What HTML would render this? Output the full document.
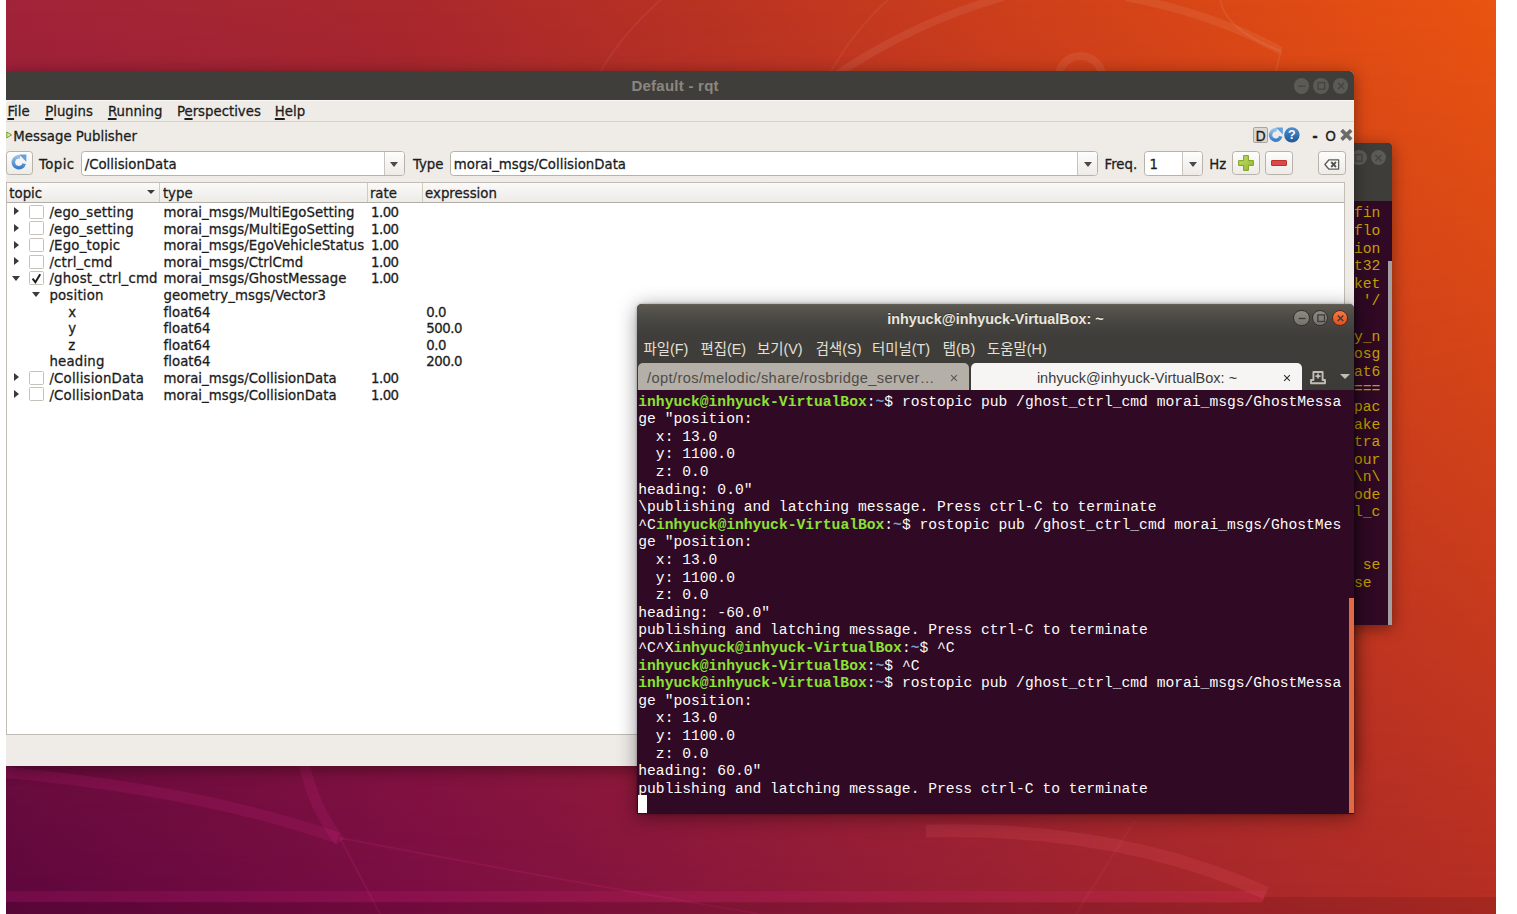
<!DOCTYPE html>
<html lang="ko">
<head>
<meta charset="utf-8">
<title>Default - rqt</title>
<style>
html,body{margin:0;padding:0;background:#fff;}
body{width:1517px;height:914px;position:relative;overflow:hidden;font-family:"DejaVu Sans","Liberation Sans",sans-serif;font-size:13.3px;color:#1c1c1c;}
#desk{position:absolute;left:6px;top:0;width:1490px;height:914px;overflow:hidden;}
#in{position:absolute;left:-6px;top:0;width:1517px;height:914px;}
#wall{position:absolute;left:6px;top:0;width:1490px;height:914px;overflow:hidden;
 background:linear-gradient(90deg,#5e073e 0%,#7a0d44 27%,#8a173c 47%,#9a2033 67%,#ab2929 87%,#b62e23 100%);}
#wall svg{position:absolute;left:0;top:0;}
.t{position:absolute;white-space:pre;line-height:16px;}
#rqt .t{-webkit-text-stroke:0.28px #1c1c1c;}
u{text-decoration:underline;text-underline-offset:1.8px;text-decoration-thickness:1.5px;}
/* ---------- rqt window ---------- */
#rqt{position:absolute;left:6px;top:71px;width:1348px;height:695px;background:#efece8;border-radius:0 5px 0 0;box-shadow:0 3px 16px rgba(0,0,0,0.42);}
#rqt .tbar{position:absolute;left:0;top:0;width:1348px;height:29.3px;background:#3f3e3a;border-radius:0 5px 0 0;}
#rqt .ttl{position:absolute;left:625.4px;top:6px;white-space:pre;font-family:"Liberation Sans",sans-serif;font-weight:bold;font-size:15px;letter-spacing:0.25px;color:#8b877f;line-height:18px;}
.wb{position:absolute;width:16px;height:16px;border-radius:8px;}
.btn{position:absolute;box-sizing:border-box;border:1px solid #b7b2aa;border-radius:3.5px;background:linear-gradient(#fdfdfc,#eeebe7);}
.combo{position:absolute;box-sizing:border-box;border:1px solid #b7b2aa;border-radius:3.5px;background:#fff;}
.combo .dd{position:absolute;right:0;top:0;bottom:0;width:19px;border-left:1px solid #c9c5be;background:linear-gradient(#fdfdfc,#eeebe7);border-radius:0 3px 3px 0;}
.combo .dd:after{content:"";position:absolute;left:5.5px;top:9.5px;border-left:4.5px solid transparent;border-right:4.5px solid transparent;border-top:5px solid #4a4a48;}
.cb{position:absolute;width:12.2px;height:12.2px;border:1px solid #c6c2bb;background:#fff;border-radius:1.5px;}
.ar{position:absolute;width:0;height:0;}
.ar.r{border-top:4.8px solid transparent;border-bottom:4.8px solid transparent;border-left:5.5px solid #3a3a3a;}
.ar.d{border-left:4.5px solid transparent;border-right:4.5px solid transparent;border-top:5.5px solid #3c3c3c;}
/* ---------- terminal ---------- */
.termw{position:absolute;background:#300a24;}
#term{left:637px;top:304px;width:717px;height:509.5px;border-radius:5px 5px 0 0;box-shadow:0 3px 20px rgba(0,0,0,0.42),0 0 3px rgba(0,0,0,0.35);}
#term .hdr{position:absolute;left:0;top:0;width:717px;height:86px;border-radius:5px 5px 0 0;background:linear-gradient(#66635a 0px,#5a5850 1.2px,#4b4944 14px,#3f3e3a 30px,#3c3b37 86px);}
.gt{font-family:"Liberation Sans","Noto Sans CJK KR",sans-serif;font-size:14.67px;}
.km{font-size:14.4px;}
pre{margin:0;}
.mono{font-family:"Liberation Mono","DejaVu Sans Mono",monospace;font-size:14.65px;line-height:17.59px;white-space:pre;position:absolute;}
.g{color:#8ae234;font-weight:bold;}
.b{color:#729fcf;font-weight:bold;}
</style>
</head>
<body>
<div id="desk"><div id="in">
<div id="wall"><svg width="1490" height="914" viewBox="6 0 1490 914" fill="none"><defs><linearGradient id="wb" x1="0" y1="0" x2="1" y2="0"><stop offset="0" stop-color="#5e073e"/><stop offset="0.27" stop-color="#7a0d44"/><stop offset="0.47" stop-color="#8a173c"/><stop offset="0.67" stop-color="#9a2033"/><stop offset="0.87" stop-color="#ab2929"/><stop offset="1" stop-color="#b62e23"/></linearGradient><linearGradient id="wt" x1="0" y1="0" x2="1" y2="0"><stop offset="0" stop-color="#a22339"/><stop offset="0.27" stop-color="#a9282c"/><stop offset="0.47" stop-color="#b93322"/><stop offset="0.67" stop-color="#cd3f1b"/><stop offset="0.87" stop-color="#df4b14"/><stop offset="1" stop-color="#e95410"/></linearGradient><linearGradient id="wm" x1="0" y1="0" x2="0" y2="1"><stop offset="0" stop-color="#fff"/><stop offset="1" stop-color="#000"/></linearGradient><mask id="wmask" maskUnits="userSpaceOnUse" x="6" y="0" width="1490" height="914"><rect x="6" y="0" width="1490" height="914" fill="url(#wm)"/></mask></defs><rect x="6" y="0" width="1490" height="914" fill="url(#wb)"/><rect x="6" y="0" width="1490" height="914" fill="url(#wt)" mask="url(#wmask)"/><g stroke="#ffffff" stroke-opacity="0.07" stroke-linecap="butt"><path d="M836 75 Q 915 22 1003 -3" stroke-width="8"/><path d="M1126 -3 Q 1215 14 1281 51" stroke-width="8"/><circle cx="1080.5" cy="78" r="22" stroke-width="8"/><path d="M1220 -2 Q 1224 30 1281 51 L1275 74" stroke-width="2"/><path d="M598 75 Q 625 30 663 -2" stroke-width="2" stroke-opacity="0.05"/><path d="M829 75 Q 852 32 890 -2" stroke-width="2" stroke-opacity="0.05"/></g><g stroke="#ff3aa8" stroke-opacity="0.11"><path d="M2 772 Q 200 790 338 838" stroke-width="11"/><path d="M304 762 Q 312 805 340 842" stroke-width="11"/><path d="M340 838 Q 560 880 760 914" stroke-width="2"/><path d="M340 838 L 380 914" stroke-width="2"/></g><path d="M6 891 H1268 L1262 902 H6 Z" fill="#ff2aa0" fill-opacity="0.12"/><path d="M926 831 Q 1120 826 1266 893"  stroke="#ff6a7a" stroke-opacity="0.13" stroke-width="13"/><path d="M1135 820 L1076 914" stroke="#ff6a7a" stroke-opacity="0.06" stroke-width="3"/><path d="M6 902.5 H1262 L1265 897 H1496 V914 H6 Z" fill="#300010" fill-opacity="0.13"/></svg></div>
<div class="termw" id="bterm" style="left:1300px;top:143px;width:92px;height:481.5px;border-radius:5px 5px 0 0;box-shadow:0 3px 16px rgba(0,0,0,0.42);">
<div style="position:absolute;left:0;top:0;width:92px;height:58px;background:#3e3d39;border-radius:5px 5px 0 0;"></div>
<div class="wb" style="left:51.3px;top:6.6px;width:15.6px;height:15.6px;background:#5b5a55;"></div><div class="wb" style="left:70.9px;top:6.6px;width:15.6px;height:15.6px;background:#5b5a55;"></div>
<svg style="position:absolute;left:51.3px;top:6.6px" width="36" height="16" viewBox="0 0 36 16"><rect x="4.5" y="4.6" width="6.6" height="6.6" fill="none" stroke="#45443f" stroke-width="1.3"/><path d="M24.4 5 L30.4 11 M30.4 5 L24.4 11" stroke="#45443f" stroke-width="1.3"/></svg>
<pre class="mono" style="left:53.9px;top:62.4px;color:#c4a000;">fin
flo
ion
t32
ket
 &#x27;/

y_n
osg
at6
===
pac
ake
tra
our
\n\
ode
l_c


 se
se </pre>
<div style="position:absolute;left:87.5px;top:118px;width:4.5px;height:363.5px;background:#a39ea1;"></div>
</div>
<div id="rqt">
<div class="tbar"></div><div class="ttl">Default - rqt</div>
<div class="wb" style="left:1287.6px;top:7.3px;width:15.6px;height:15.6px;background:#5b5a55;"></div>
<div class="wb" style="left:1307.2px;top:7.3px;width:15.6px;height:15.6px;background:#5b5a55;"></div>
<div class="wb" style="left:1326.7px;top:7.3px;width:15.6px;height:15.6px;background:#5b5a55;"></div>
<svg style="position:absolute;left:1287.6px;top:7.3px" width="56" height="16" viewBox="0 0 56 16"><path d="M4.2 8.2 H11.4" stroke="#45443f" stroke-width="1.3"/><rect x="24.1" y="4.6" width="6.6" height="6.6" fill="none" stroke="#45443f" stroke-width="1.3"/><path d="M44.1 5 L50.1 11 M50.1 5 L44.1 11" stroke="#45443f" stroke-width="1.3"/></svg>
<div style="position:absolute;left:0;top:29px;width:1348px;height:1px;background:#f8f7f5;"></div>
<div style="position:absolute;left:0;top:50px;width:1348px;height:1px;background:#d5d1cb;"></div>
<div class="t" style="left:1.4px;top:32.8px;"><u>F</u>ile</div>
<div class="t" style="left:39.2px;top:32.8px;"><u>P</u>lugins</div>
<div class="t" style="left:101.9px;top:32.8px;"><u>R</u>unning</div>
<div class="t" style="left:170.9px;top:32.8px;">P<u>e</u>rspectives</div>
<div class="t" style="left:268.8px;top:32.8px;"><u>H</u>elp</div>
<svg style="position:absolute;left:0px;top:60px" width="7" height="8" viewBox="0 0 7 8"><path d="M0.8 1 L5.6 3.9 L0.8 6.8 Z" fill="#d9ecb0" stroke="#73a021" stroke-width="1"/></svg>
<div class="t" style="left:7.3px;top:57.6px;">Message Publisher</div>
<div style="position:absolute;left:1247px;top:56.3px;width:13px;height:13.7px;border:1px solid #aaa69f;border-radius:2px;background:#dcd9d4;box-sizing:content-box;"></div>
<div class="t" style="left:1249.6px;top:57.9px;font-size:13.3px;">D</div>
<svg style="position:absolute;left:1262px;top:55.7px" width="16" height="16" viewBox="0 0 16 16"><path d="M12.8 9.3 A5.2 5.2 0 1 1 8.9 2.9" fill="none" stroke="url(#rg)" stroke-width="3.5"/><path d="M7.9 0.5 H14.9 V7.6 Z" fill="#63a1dd"/></svg>
<svg style="position:absolute;left:1278px;top:56px" width="16" height="16" viewBox="0 0 16 16"><defs><linearGradient id="hg" x1="0" y1="0" x2="0" y2="1"><stop offset="0" stop-color="#4f8fd0"/><stop offset="1" stop-color="#1d5796"/></linearGradient></defs><circle cx="7.9" cy="7.9" r="7.7" fill="url(#hg)"/><text x="7.9" y="12.2" text-anchor="middle" font-family="Liberation Sans, sans-serif" font-weight="bold" font-size="12.5" fill="#fff">?</text></svg>
<div class="t" style="left:1306.2px;top:57.9px;font-weight:bold;">-</div>
<div class="t" style="left:1319.2px;top:57.2px;font-size:13.6px;">O</div>
<svg style="position:absolute;left:1334px;top:58.3px" width="13" height="12" viewBox="0 0 13 12"><path d="M1.6 1.2 L11.2 10.6 M11.2 1.2 L1.6 10.6" stroke="#6b6b69" stroke-width="3.7" fill="none"/></svg>
<div class="btn" style="left:0.3px;top:80px;width:27px;height:24px;"></div>
<svg style="position:absolute;left:5.4px;top:83.4px" width="16" height="16" viewBox="0 0 16 16"><defs><linearGradient id="rg" x1="0" y1="0" x2="0" y2="1"><stop offset="0" stop-color="#8fbfec"/><stop offset="1" stop-color="#3d7ec6"/></linearGradient></defs><path d="M13.2 9.6 A5.5 5.5 0 1 1 9.2 2.9" fill="none" stroke="url(#rg)" stroke-width="3.6"/><path d="M8.2 0.6 H15.4 V8 Z" fill="#63a1dd"/></svg>
<div class="t" style="left:33.0px;top:86.2px;letter-spacing:0.4px;">Topic</div>
<div class="combo" style="left:75.4px;top:80px;width:323.4px;height:25px;"><div class="dd"></div></div>
<div class="t" style="left:78.7px;top:86.2px;">/CollisionData</div>
<div class="t" style="left:406.9px;top:86.2px;">Type</div>
<div class="combo" style="left:443.8px;top:80px;width:648.4px;height:25px;"><div class="dd"></div></div>
<div class="t" style="left:447.8px;top:86.2px;">morai_msgs/CollisionData</div>
<div class="t" style="left:1098.5px;top:86.2px;">Freq.</div>
<div class="combo" style="left:1137.8px;top:80px;width:59.4px;height:25px;"><div class="dd"></div></div>
<div class="t" style="left:1143.4px;top:86.2px;">1</div>
<div class="t" style="left:1203.3px;top:86.2px;">Hz</div>
<div class="btn" style="left:1226px;top:80px;width:27.6px;height:24px;"></div>
<svg style="position:absolute;left:1231.9px;top:83.9px" width="16" height="16" viewBox="0 0 16 16"><defs><linearGradient id="pg" x1="0" y1="0" x2="1" y2="1"><stop offset="0" stop-color="#c3de6c"/><stop offset="1" stop-color="#92b82c"/></linearGradient></defs><path d="M5.6 0.6 H10.4 V5.6 H15.4 V10.4 H10.4 V15.4 H5.6 V10.4 H0.6 V5.6 H5.6 Z" fill="url(#pg)" stroke="#7f9f22" stroke-width="1" stroke-linejoin="round"/></svg>
<div class="btn" style="left:1259.3px;top:80px;width:27.5px;height:24px;"></div>
<div style="position:absolute;left:1265.3px;top:89.3px;width:14.6px;height:4.3px;background:#db4a46;border:1px solid #c0302c;border-radius:1px;box-sizing:content-box;margin:-0.5px"></div>
<div class="btn" style="left:1312px;top:80px;width:27.8px;height:24px;"></div>
<svg style="position:absolute;left:1318.4px;top:87.5px" width="16" height="11" viewBox="0 0 16 11"><path d="M5 0.8 H14.6 V10.2 H5 L0.9 5.5 Z" fill="#fbfbfa" stroke="#5a5a58" stroke-width="1.3" stroke-linejoin="round"/><path d="M7.2 3 L12 8 M12 3 L7.2 8" stroke="#555553" stroke-width="1.9"/></svg>
<div style="position:absolute;left:0.3px;top:111px;width:1339.2px;height:553.2px;box-sizing:border-box;border:1px solid #c1bdb6;background:#fff;"></div>
<div style="position:absolute;left:1.3px;top:112px;width:1337.2px;height:19.2px;background:linear-gradient(#fbfaf9,#edebe7);border-bottom:1px solid #b3afa8;"></div>
<div style="position:absolute;left:152.5px;top:112px;width:1px;height:19px;background:#cfcbc5;"></div>
<div style="position:absolute;left:360.8px;top:112px;width:1px;height:19px;background:#cfcbc5;"></div>
<div style="position:absolute;left:416.1px;top:112px;width:1px;height:19px;background:#cfcbc5;"></div>
<div class="t" style="left:3.3px;top:115.0px;">topic</div>
<div class="t" style="left:156.9px;top:115.0px;">type</div>
<div class="t" style="left:363.9px;top:115.0px;">rate</div>
<div class="t" style="left:419.1px;top:115.0px;">expression</div>
<div class="ar d" style="left:140.7px;top:119px;border-left-width:4px;border-right-width:4px;border-top-width:4.5px;"></div>
<div class="ar r" style="left:7.5px;top:136.3px;"></div>
<div class="cb" style="left:23.4px;top:133.7px;"></div>
<div class="t" style="left:43.4px;top:133.9px;letter-spacing:0.2px;">/ego_setting</div>
<div class="t" style="left:157.5px;top:133.9px;letter-spacing:0.04px;">morai_msgs/MultiEgoSetting</div>
<div class="t" style="left:365.1px;top:133.9px;letter-spacing:-0.55px;">1.00</div>
<div class="ar r" style="left:7.5px;top:152.9px;"></div>
<div class="cb" style="left:23.4px;top:150.3px;"></div>
<div class="t" style="left:43.4px;top:150.5px;letter-spacing:0.2px;">/ego_setting</div>
<div class="t" style="left:157.5px;top:150.5px;letter-spacing:0.04px;">morai_msgs/MultiEgoSetting</div>
<div class="t" style="left:365.1px;top:150.5px;letter-spacing:-0.55px;">1.00</div>
<div class="ar r" style="left:7.5px;top:169.5px;"></div>
<div class="cb" style="left:23.4px;top:166.9px;"></div>
<div class="t" style="left:43.4px;top:167.1px;letter-spacing:0.2px;">/Ego_topic</div>
<div class="t" style="left:157.5px;top:167.1px;letter-spacing:0.04px;">morai_msgs/EgoVehicleStatus</div>
<div class="t" style="left:365.1px;top:167.1px;letter-spacing:-0.55px;">1.00</div>
<div class="ar r" style="left:7.5px;top:186.1px;"></div>
<div class="cb" style="left:23.4px;top:183.5px;"></div>
<div class="t" style="left:43.4px;top:183.7px;letter-spacing:0.2px;">/ctrl_cmd</div>
<div class="t" style="left:157.5px;top:183.7px;letter-spacing:0.04px;">morai_msgs/CtrlCmd</div>
<div class="t" style="left:365.1px;top:183.7px;letter-spacing:-0.55px;">1.00</div>
<div class="ar d" style="left:5.5px;top:204.7px;"></div>
<div class="cb" style="left:23.4px;top:200.1px;"></div>
<svg style="position:absolute;left:24.4px;top:201.1px" width="13" height="13" viewBox="0 0 13 13"><path d="M2.6 6.6 L5.4 10.2 L10.2 2.2" fill="none" stroke="#1e1e1e" stroke-width="2"/></svg>
<div class="t" style="left:43.4px;top:200.3px;letter-spacing:0.2px;">/ghost_ctrl_cmd</div>
<div class="t" style="left:157.5px;top:200.3px;letter-spacing:0.04px;">morai_msgs/GhostMessage</div>
<div class="t" style="left:365.1px;top:200.3px;letter-spacing:-0.55px;">1.00</div>
<div class="ar d" style="left:25.5px;top:221.3px;"></div>
<div class="t" style="left:43.4px;top:216.9px;letter-spacing:0.2px;">position</div>
<div class="t" style="left:157.5px;top:216.9px;letter-spacing:0.04px;">geometry_msgs/Vector3</div>
<div class="t" style="left:62.2px;top:233.5px;letter-spacing:0.2px;">x</div>
<div class="t" style="left:157.5px;top:233.5px;letter-spacing:0.04px;">float64</div>
<div class="t" style="left:420.3px;top:233.5px;letter-spacing:-0.5px;">0.0</div>
<div class="t" style="left:62.2px;top:250.1px;letter-spacing:0.2px;">y</div>
<div class="t" style="left:157.5px;top:250.1px;letter-spacing:0.04px;">float64</div>
<div class="t" style="left:420.3px;top:250.1px;letter-spacing:-0.5px;">500.0</div>
<div class="t" style="left:62.2px;top:266.7px;letter-spacing:0.2px;">z</div>
<div class="t" style="left:157.5px;top:266.7px;letter-spacing:0.04px;">float64</div>
<div class="t" style="left:420.3px;top:266.7px;letter-spacing:-0.5px;">0.0</div>
<div class="t" style="left:43.4px;top:283.3px;letter-spacing:0.2px;">heading</div>
<div class="t" style="left:157.5px;top:283.3px;letter-spacing:0.04px;">float64</div>
<div class="t" style="left:420.3px;top:283.3px;letter-spacing:-0.5px;">200.0</div>
<div class="ar r" style="left:7.5px;top:302.3px;"></div>
<div class="cb" style="left:23.4px;top:299.7px;"></div>
<div class="t" style="left:43.4px;top:299.9px;letter-spacing:0.2px;">/CollisionData</div>
<div class="t" style="left:157.5px;top:299.9px;letter-spacing:0.04px;">morai_msgs/CollisionData</div>
<div class="t" style="left:365.1px;top:299.9px;letter-spacing:-0.55px;">1.00</div>
<div class="ar r" style="left:7.5px;top:318.9px;"></div>
<div class="cb" style="left:23.4px;top:316.3px;"></div>
<div class="t" style="left:43.4px;top:316.5px;letter-spacing:0.2px;">/CollisionData</div>
<div class="t" style="left:157.5px;top:316.5px;letter-spacing:0.04px;">morai_msgs/CollisionData</div>
<div class="t" style="left:365.1px;top:316.5px;letter-spacing:-0.55px;">1.00</div>
</div>
<div class="termw" id="term">
<div class="hdr"></div>
<div class="t gt" style="left:0;width:717px;text-align:center;top:5.5px;font-weight:bold;font-size:14.4px;color:#e9e6df;line-height:18px;text-shadow:0 -1px 0 rgba(0,0,0,0.35);">inhyuck@inhyuck-VirtualBox: ~</div>
<div class="wb" style="left:656.2px;top:5.7px;width:14.4px;height:14.4px;background:linear-gradient(#8d8a84,#76736d);border:0.8px solid #33322e;box-sizing:content-box;"></div>
<div class="wb" style="left:675.1px;top:5.7px;width:14.4px;height:14.4px;background:linear-gradient(#8d8a84,#76736d);border:0.8px solid #33322e;box-sizing:content-box;"></div>
<div class="wb" style="left:694.5px;top:5.7px;width:14.4px;height:14.4px;background:linear-gradient(#f37a45,#e2501c);border:0.8px solid #5a2a18;box-sizing:content-box;"></div>
<svg style="position:absolute;left:656.6px;top:6.0px" width="56" height="16" viewBox="0 0 56 16"><path d="M4.7 8.5 H11.7" stroke="#3c3b37" stroke-width="1.3"/><rect x="23.9" y="4.9" width="6.6" height="6.6" fill="none" stroke="#3c3b37" stroke-width="1.3"/><path d="M43.7 5.4 L49.3 11 M49.3 5.4 L43.7 11" stroke="#3c3b37" stroke-width="1.4"/></svg>
<div class="t gt km" style="left:6.5px;top:34px;color:#e4e0d8;line-height:22px;">파일(F)</div>
<div class="t gt km" style="left:63.5px;top:34px;color:#e4e0d8;line-height:22px;">편집(E)</div>
<div class="t gt km" style="left:120.0px;top:34px;color:#e4e0d8;line-height:22px;">보기(V)</div>
<div class="t gt km" style="left:178.8px;top:34px;color:#e4e0d8;line-height:22px;">검색(S)</div>
<div class="t gt km" style="left:235.0px;top:34px;color:#e4e0d8;line-height:22px;">터미널(T)</div>
<div class="t gt km" style="left:305.8px;top:34px;color:#e4e0d8;line-height:22px;">탭(B)</div>
<div class="t gt km" style="left:350.0px;top:34px;color:#e4e0d8;line-height:22px;">도움말(H)</div>
<div style="position:absolute;left:1.3px;top:59.2px;width:331px;height:27px;background:#b4afa7;border-radius:5px 5px 0 0;"></div>
<div style="position:absolute;left:334px;top:59.2px;width:331.2px;height:27px;background:#f6f5f3;border-radius:5px 5px 0 0;"></div>
<div class="t gt" style="left:10.1px;top:63.5px;color:#4f4c48;line-height:20px;letter-spacing:0.37px;">/opt/ros/melodic/share/rosbridge_server…</div>
<svg style="position:absolute;left:312.8px;top:69.6px" width="8" height="8" viewBox="0 0 8 8"><path d="M1.1 1.1 L6.9 6.9 M6.9 1.1 L1.1 6.9" stroke="#5a5853" stroke-width="1.05"/></svg>
<div class="t gt" style="left:399.9px;top:63.5px;color:#3b3b3b;line-height:20px;font-size:14.5px;">inhyuck@inhyuck-VirtualBox: ~</div>
<svg style="position:absolute;left:645.9px;top:69.6px" width="8" height="8" viewBox="0 0 8 8"><path d="M1.1 1.1 L6.9 6.9 M6.9 1.1 L1.1 6.9" stroke="#2e2e2e" stroke-width="1.05"/></svg>
<svg style="position:absolute;left:672px;top:64.5px" width="18" height="17" viewBox="0 0 18 17"><path d="M2 14.2 H16 V11 H13.6 V3 H4.4 V11 H2 Z" fill="none" stroke="#c2beb6" stroke-width="1.9" stroke-linejoin="round"/><path d="M9 4.6 V9.6 M6.5 7.1 H11.5" stroke="#c2beb6" stroke-width="1.7"/></svg>
<div class="ar d" style="left:702.8px;top:69.6px;border-top-color:#c2beb6;border-left-width:5px;border-right-width:5px;border-top-width:5.5px;"></div>
<pre class="mono" style="left:1.3px;top:89.7px;color:#fbfbfb;"><span class="g">inhyuck@inhyuck-VirtualBox</span>:<span class="b">~</span>$ rostopic pub /ghost_ctrl_cmd morai_msgs/GhostMessa
ge &quot;position:
  x: 13.0
  y: 1100.0
  z: 0.0
heading: 0.0&quot;
\publishing and latching message. Press ctrl-C to terminate
^C<span class="g">inhyuck@inhyuck-VirtualBox</span>:<span class="b">~</span>$ rostopic pub /ghost_ctrl_cmd morai_msgs/GhostMes
ge &quot;position:
  x: 13.0
  y: 1100.0
  z: 0.0
heading: -60.0&quot;
publishing and latching message. Press ctrl-C to terminate
^C^X<span class="g">inhyuck@inhyuck-VirtualBox</span>:<span class="b">~</span>$ ^C
<span class="g">inhyuck@inhyuck-VirtualBox</span>:<span class="b">~</span>$ ^C
<span class="g">inhyuck@inhyuck-VirtualBox</span>:<span class="b">~</span>$ rostopic pub /ghost_ctrl_cmd morai_msgs/GhostMessa
ge &quot;position:
  x: 13.0
  y: 1100.0
  z: 0.0
heading: 60.0&quot;
publishing and latching message. Press ctrl-C to terminate
</pre>
<div style="position:absolute;left:1.2px;top:491.2px;width:8.8px;height:17.6px;background:#fff;"></div>
<div style="position:absolute;left:712.2px;top:293.8px;width:4.8px;height:215.7px;background:#df6a44;"></div>
</div>
</div></div>
</body>
</html>
